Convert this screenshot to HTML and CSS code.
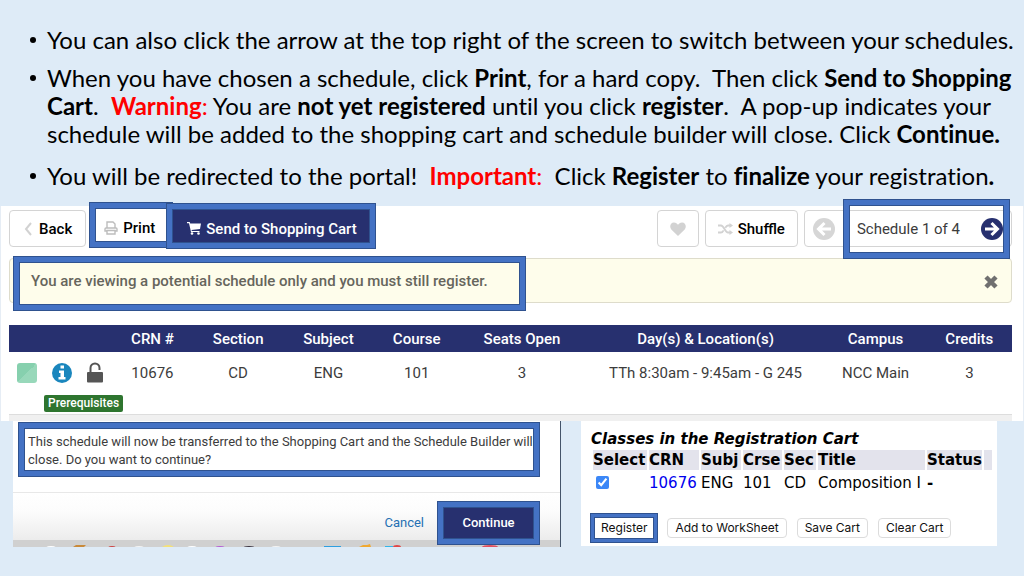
FILE: index.html
```
<!DOCTYPE html>
<html lang="en">

<head>
    <meta charset="UTF-8" />
    <meta name="viewport" content="width=device-width, initial-scale=1.0" />
    <title>Schedule Builder - Register</title>
    <link rel="stylesheet" href="styles.css">
</head>

<body>
    <ul class="steps">
        <li>You can also click the arrow at the top right of the screen to switch between your schedules.</li>
        <li>When you have chosen a schedule, click <b>Print</b>, for a hard copy.&nbsp; Then click <b>Send to Shopping Cart</b>.&nbsp; <span class="red"><b>Warning</b>:</span> You are <b>not yet registered</b> until you click <b>register</b>.&nbsp; A pop-up indicates your schedule will be added to the shopping cart and schedule builder will close. Click <b>Continue.</b></li>
        <li>You will be redirected to the portal!&nbsp; <span class="red"><b>Important</b>:</span>&nbsp; Click <b>Register</b> to <b>finalize</b> your registration<b>.</b></li>
    </ul>

    <section class="builder">
        <div class="toolbar">
            <button class="btn btn-back">
                <svg width="8" height="14" viewBox="0 0 8 14"><path d="M7 1L2 7l5 6" fill="none" stroke="#d2d2d2" stroke-width="2"/></svg>
                Back
            </button>
            <button class="btn btn-print callout">
                <svg width="14" height="14" viewBox="0 0 14 14" fill="none" stroke="#bdbdbd" stroke-width="1.4"><path d="M3 7V1h6l2 2v4M3 10H1V8q0-1 1-1h10q1 0 1 1v2h-2M3 9.500h8V13H3z"/></svg>
                Print
            </button>
            <button class="btn btn-send callout">
                <svg width="14" height="13" viewBox="0 0 14 13" fill="#fff"><path d="M0 0h2.700l.5 1.500H14L13 7 4.500 8l.3 1H12.500v1H4L2 1.200H0z"/><circle cx="5" cy="11.500" r="1.300"/><circle cx="11.500" cy="11.500" r="1.300"/></svg>
                Send to Shopping Cart
            </button>
            <div class="toolbar-right">
                <button class="btn btn-heart" aria-label="Favorite">
                    <svg width="16" height="14" viewBox="0 0 16 14" fill="#d2d2d2"><path d="M8 14L1.300 7.500C-.8 5 .2 .5 4 .5 6 .5 7 1.500 8 2.800 9 1.500 10 .5 12 .5c3.800 0 4.800 4.500 2.700 7z"/></svg>
                </button>
                <button class="btn btn-shuffle">
                    <svg width="15" height="12" viewBox="0 0 15 12"><path d="M0 2.500h3c3 0 4 7 7 7h2M0 9.500h3c1.200 0 2-1 2.600-2.200M7.300 4.700C8 3.500 8.700 2.500 10 2.500h2" fill="none" stroke="#d2d2d2" stroke-width="1.800"/><path d="M11.500 0L15 2.500 11.500 5zM11.500 7L15 9.500 11.500 12z" fill="#d2d2d2"/></svg>
                    Shuffle
                </button>
                <div class="pager">
                    <button class="arrow" aria-label="Previous schedule">
                        <svg width="22" height="22" viewBox="0 0 22 22"><circle cx="11" cy="11" r="11" fill="#d6d6d6"/><path d="M18 11H6M11.500 5L5.500 11l6 6" fill="none" stroke="#fff" stroke-width="3"/></svg>
                    </button>
                    <div class="pager-current callout">
                        <span>Schedule 1 of 4</span>
                        <button class="arrow" aria-label="Next schedule">
                            <svg width="22" height="22" viewBox="0 0 22 22"><circle cx="11" cy="11" r="11" fill="#27306f"/><path d="M4 11h12M10.500 5l6 6-6 6" fill="none" stroke="#fff" stroke-width="3"/></svg>
                        </button>
                    </div>
                </div>
            </div>
        </div>

        <div class="alert">
            <p class="alert-text callout">You are viewing a potential schedule only and you must still register.</p>
            <button class="alert-close" aria-label="Close">
                <svg width="16" height="16" viewBox="0 0 16 16"><path d="M3 3l10 10M13 3L3 13" stroke="#707070" stroke-width="4.500"/></svg>
            </button>
        </div>

        <table class="schedule">
            <colgroup>
                <col class="c-icons"><col class="c-crn"><col class="c-section"><col class="c-subject"><col class="c-course"><col class="c-seats"><col class="c-days"><col class="c-campus"><col class="c-credits">
            </colgroup>
            <thead>
                <tr>
                    <th></th>
                    <th>CRN #</th>
                    <th>Section</th>
                    <th>Subject</th>
                    <th>Course</th>
                    <th>Seats Open</th>
                    <th>Day(s) &amp; Location(s)</th>
                    <th>Campus</th>
                    <th>Credits</th>
                </tr>
            </thead>
            <tbody>
                <tr class="class-row">
                    <td>
                        <div class="row-icons">
                            <span class="swatch"></span>
                            <svg width="20" height="20" viewBox="0 0 20 20"><circle cx="10" cy="10" r="10" fill="#1a86bd"/><path d="M8.500 2.500h3.500v3H8.500zM7 7.500h5V14h1.500v2.500h-7V14H8.500v-4H7z" fill="#fff"/></svg>
                            <svg width="16" height="21" viewBox="0 0 16 21"><path d="M3.500 11V6a4.500 4.500 0 0 1 9 0v2" fill="none" stroke="#555" stroke-width="2"/><rect y="10" width="16" height="10.500" rx="1" fill="#555"/></svg>
                        </div>
                    </td>
                    <td>10676</td>
                    <td>CD</td>
                    <td>ENG</td>
                    <td>101</td>
                    <td>3</td>
                    <td>TTh 8:30am - 9:45am - G 245</td>
                    <td>NCC Main</td>
                    <td>3</td>
                </tr>
                <tr class="badge-row">
                    <td colspan="9"><span class="badge">Prerequisites</span></td>
                </tr>
            </tbody>
        </table>
        <div class="builder-end"></div>
    </section>

    <div class="panels">
        <section class="dialog">
            <p class="dialog-text callout">This schedule will now be transferred to the Shopping Cart and the Schedule Builder will<br>close. Do you want to continue?</p>
            <div class="dialog-footer">
                <button class="btn-cancel">Cancel</button>
                <button class="btn-continue callout">Continue</button>
            </div>
            <svg class="dock" viewBox="0 0 547 7" preserveAspectRatio="none">
                <ellipse cx="38" cy="8" rx="5" ry="2" fill="#fff"/>
                <path d="M60 7l3-2h10l-2 2z" fill="#c98a3a"/>
                <ellipse cx="99" cy="8" rx="4" ry="2" fill="#c44"/>
                <ellipse cx="126" cy="8" rx="5" ry="2" fill="#f4f4f4"/>
                <ellipse cx="155" cy="8" rx="6" ry="3" fill="#f3e07a"/>
                <ellipse cx="179" cy="8" rx="5" ry="2" fill="#fff"/>
                <ellipse cx="207" cy="8" rx="5" ry="2" fill="#b55fd6"/>
                <ellipse cx="236" cy="8" rx="6" ry="2" fill="#3a3340"/>
                <ellipse cx="263" cy="8" rx="5" ry="2" fill="#f4f4f4"/>
                <rect x="311" y="6" width="17" height="1" fill="#2f9fe0"/>
                <path d="M346 7l4-2 4 0 3-1 1 3z" fill="#f0a830"/>
                <rect x="372" y="6" width="8" height="1" fill="#35b5e8"/>
                <ellipse cx="384" cy="7" rx="4" ry="2" fill="#e04848"/>
                <ellipse cx="477" cy="7" rx="8" ry="2" fill="#e05060"/>
            </svg>
        </section>

        <section class="cart">
            <h2>Classes in the Registration Cart</h2>
            <table class="cart-table">
                <thead>
                    <tr>
                        <th class="k-select">Select</th>
                        <th class="k-crn">CRN</th>
                        <th class="k-subj">Subj</th>
                        <th class="k-crse">Crse</th>
                        <th class="k-sec">Sec</th>
                        <th class="k-title">Title</th>
                        <th class="k-status">Status</th>
                        <th></th>
                    </tr>
                </thead>
                <tbody>
                    <tr>
                        <td><input type="checkbox" aria-label="Select 10676" checked></td>
                        <td><a href="#">10676</a></td>
                        <td>ENG</td>
                        <td>101</td>
                        <td>CD</td>
                        <td>Composition I</td>
                        <td><b>-</b></td>
                        <td></td>
                    </tr>
                </tbody>
            </table>
            <div class="cart-actions">
                <button class="callout">Register</button>
                <button>Add to WorkSheet</button>
                <button>Save Cart</button>
                <button>Clear Cart</button>
            </div>
        </section>
    </div>
</body>

</html>
```
FILE: styles.css
```
:root {
    --slide-bg: #deebf7;
    --navy: #27306f;
    --callout: #4472c4;
    --callout-edge: #2f528f;
    --border-color: #d4d4d4;
    --text-color: #3c3c3c;
}

* {
    box-sizing: border-box;
    margin: 0;
    padding: 0;
}

body {
    font-family: Roboto, "Liberation Sans", sans-serif;
    font-size: 15px;
    color: var(--text-color);
    background: var(--slide-bg);
    min-height: 100vh;
}

button {
    font-family: inherit;
    cursor: pointer;
    white-space: nowrap;
}

svg {
    display: block;
    flex: none;
}

/* Thick blue frame around the parts the slide points at */
.callout {
    position: relative;
    box-shadow: 0 0 0 1px var(--callout-edge), 0 0 0 6px var(--callout), 0 0 0 7px var(--callout-edge);
}

/* Instructions */
.steps {
    padding: 26px 8px 16px 47px;
    font-family: Lato, sans-serif;
    font-size: 24px;
    font-variant-ligatures: none;
    line-height: 28px;
    color: #000;
    list-style: none;
}

.steps li {
    position: relative;
    margin-bottom: 10px;
}

.steps li:last-child {
    margin: 14px 0 0;
}

.steps li::before {
    content: "";
    position: absolute;
    left: -17px;
    top: 11px;
    width: 6px;
    height: 6px;
    border-radius: 50%;
    background: #000;
}

.red {
    color: #f00;
}

/* Schedule builder */
.builder {
    background: #fff;
    border: solid #e6edf5;
    border-width: 0 1px;
    padding: 4px 11px 0 8px;
}

.toolbar {
    display: flex;
    align-items: flex-start;
    height: 48px;
}

.btn {
    display: flex;
    align-items: center;
    justify-content: center;
    height: 37px;
    border: 1px solid var(--border-color);
    border-radius: 4px;
    background: #fff;
    color: #000;
    font-size: 15px;
    font-weight: 500;
}

.btn-back {
    gap: 7px;
    padding: 0 13px 0 14px;
}

.btn-print {
    gap: 5px;
    height: 32px;
    margin: -1px 7px 0 10px;
    padding: 6px 11px 0 8px;
    border: none;
    border-radius: 0;
}

.btn-send {
    gap: 5px;
    height: 32px;
    padding: 5px 12px 0 14px;
    border: none;
    border-radius: 0;
    background: var(--navy);
    color: #fff;
}

.toolbar-right {
    display: flex;
    gap: 6px;
    margin-left: auto;
}

.btn-heart {
    width: 42px;
}

.btn-shuffle {
    gap: 5px;
    padding: 0 12px;
}

.pager {
    display: flex;
    align-items: center;
    height: 37px;
    border: 1px solid var(--border-color);
    border-radius: 4px;
    padding: 0 8px;
}

.arrow {
    border: none;
    background: none;
}

.pager-current {
    display: flex;
    align-items: center;
    gap: 21px;
    height: 46px;
    margin-left: 15px;
    padding-left: 7px;
}

.alert {
    display: flex;
    align-items: flex-start;
    justify-content: space-between;
    height: 45px;
    padding: 4px 12px 0 10px;
    border: 1px solid #dedccb;
    border-radius: 4px;
    background: #fefdeb;
}

.alert-text {
    width: 51%;
    height: 41px;
    padding-left: 11px;
    background: #fefdeb;
    color: #66655c;
    font-weight: 500;
    line-height: 36px;
}

.alert-close {
    margin-top: 11px;
    border: none;
    background: none;
}

.schedule {
    width: 100%;
    margin-top: 22px;
    border-collapse: collapse;
    table-layout: fixed;
    text-align: center;
}

.schedule th {
    height: 27px;
    background: var(--navy);
    color: #fff;
    font-weight: 500;
    white-space: nowrap;
}

.c-icons { width: 10%; }
.c-crn { width: 8.6%; }
.c-section { width: 8.5%; }
.c-subject { width: 9.5%; }
.c-course { width: 8.1%; }
.c-seats { width: 12.9%; }
.c-days { width: 23.7%; }
.c-campus { width: 10.2%; }

.class-row td {
    height: 41px;
}

.row-icons {
    display: flex;
    align-items: center;
    gap: 15px;
    padding-left: 8px;
}

.swatch {
    width: 20px;
    height: 20px;
    border-radius: 3px;
    background: linear-gradient(135deg, #86d0ae 50%, #98d8ba 50%);
}

.badge-row td {
    height: 21px;
    padding: 2px 0 1px 35px;
    border-bottom: 1px solid #ddd;
    text-align: left;
    vertical-align: top;
}

.badge {
    display: block;
    width: fit-content;
    padding: 0 4px;
    border-radius: 2px;
    background: #2e752f;
    color: #fff;
    font-size: 12px;
    font-weight: 500;
    line-height: 17px;
}

.builder-end {
    height: 6px;
    background: #f0f0f0;
}

.panels {
    display: grid;
    grid-template-columns: 548fr 416fr;
    gap: 20px;
    align-items: start;
    padding: 0 27px 0 13px;
}

/* Confirmation dialog */
.dialog {
    padding-top: 8px;
    border-right: 1px solid #44546a;
    background: #fff;
}

.dialog-text {
    height: 41px;
    margin: 0 27px 0 12px;
    padding: 4px 0 0 3px;
    background: #fff;
    font-size: 13px;
    line-height: 18px;
    white-space: nowrap;
}

.dialog-footer {
    display: flex;
    align-items: flex-end;
    justify-content: flex-end;
    gap: 20px;
    height: 48px;
    margin-top: 22px;
    padding: 0 27px 2px 0;
    border-top: 1px solid #e8e8e8;
    background: linear-gradient(#fff, #fcfcfc 40%, #ececec);
}

.btn-cancel {
    height: 30px;
    border: none;
    background: none;
    color: #2470b3;
    font-size: 13px;
}

.btn-continue {
    width: 89px;
    height: 30px;
    border: none;
    background: var(--navy);
    color: #fff;
    font-size: 13px;
    font-weight: 500;
}

.dock {
    width: 100%;
    height: 7px;
    background: #d0d0d0;
}

/* Registration cart */
.cart {
    height: 125px;
    padding: 9px 3px 0 10px;
    background: #fff;
    color: #000;
    font-family: "DejaVu Sans", sans-serif;
}

.cart h2 {
    font-size: 15px;
    font-style: italic;
    line-height: 18px;
    white-space: nowrap;
}

.cart-table {
    width: 100%;
    border-spacing: 2px;
    table-layout: fixed;
    font-size: 15px;
    line-height: 20px;
    text-align: left;
    white-space: nowrap;
}

.cart-table th {
    background: #e3e3ec;
}

.k-select { width: 54px; }
.k-crn { width: 50px; }
.k-subj { width: 40px; }
.k-crse { width: 39px; }
.k-sec { width: 32px; }
.k-title { width: 107px; }
.k-status { width: 55px; }

.cart-table td {
    height: 22px;
}

.cart-table a {
    color: #00e;
    text-decoration: none;
}

.cart-table input {
    display: block;
    width: 13px;
    height: 13px;
    margin-left: 3px;
    accent-color: #3b87f7;
}

.cart-actions {
    display: flex;
    gap: 10px;
    margin-top: 22px;
}

.cart-actions button {
    height: 20px;
    padding: 0 7px;
    border: 1px solid #dcdcdc;
    border-radius: 4px;
    background: #fff;
    color: #111;
    font-family: Inter, sans-serif;
    font-size: 12px;
}

.cart-actions .callout {
    margin: 0 4px;
    padding: 0 6px;
    border: none;
    border-radius: 0;
    box-shadow: 0 0 0 1px var(--callout-edge), 0 0 0 4px var(--callout), 0 0 0 5px var(--callout-edge);
}
```
